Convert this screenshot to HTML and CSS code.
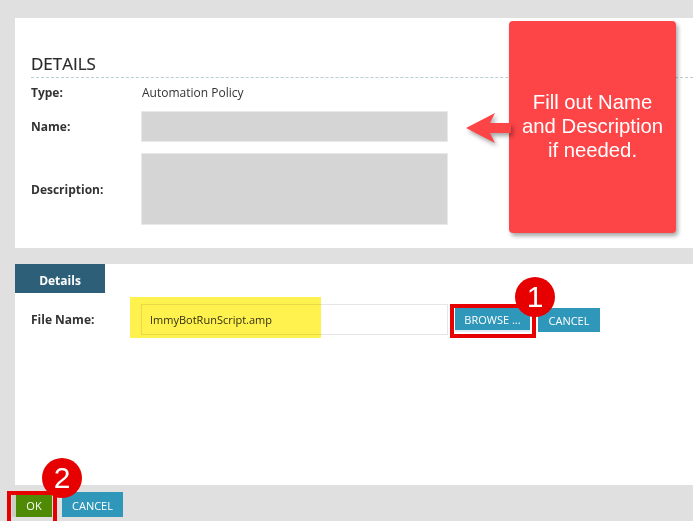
FILE: index.html
```html
<!DOCTYPE html>
<html>
<head>
<meta charset="utf-8">
<link rel="stylesheet" href="styles.css">
</head>
<body>
<div class="page">
  <section class="panel details">
    <h2 class="heading">DETAILS</h2>
    <div class="row row-type">
      <span class="label">Type:</span>
      <span class="value">Automation Policy</span>
    </div>
    <div class="row row-name">
      <span class="label">Name:</span>
      <div class="field field-name"></div>
    </div>
    <div class="row row-desc">
      <span class="label">Description:</span>
      <div class="field field-desc"></div>
    </div>
  </section>

  <section class="panel upload">
    <div class="tab">Details</div>
    <div class="row row-file">
      <span class="label">File Name:</span>
      <div class="file-input">ImmyBotRunScript.amp</div>
      <button class="btn btn-browse">BROWSE ...</button>
      <button class="btn btn-cancel">CANCEL</button>
    </div>
  </section>

  <footer class="footer">
    <button class="btn btn-ok">OK</button>
    <button class="btn btn-cancel btn-cancel2">CANCEL</button>
  </footer>
</div>

<!-- annotations -->
<div class="highlight"></div>
<div class="callout">Fill out Name<br>and Description<br>if needed.</div>
<svg class="arrow" width="50" height="40" viewBox="0 0 50 40">
  <polygon points="1,18 30,3 25,13 46,13 46,23 25,23 30,33" fill="#fd4547"/>
</svg>
<div class="box box-browse"></div>
<div class="box box-ok"></div>
<div class="badge badge-1">1</div>
<div class="badge badge-2">2</div>
</body>
</html>
```

FILE: styles.css
```css
* { box-sizing: border-box; }
html, body { margin: 0; padding: 0; }
body {
  background: #e0e0e0;
  font-family: "Open Sans", "Liberation Sans", sans-serif;
  color: #333;
  width: 693px;
  height: 521px;
  overflow: hidden;
  position: relative;
}
.page {
  display: flex;
  flex-direction: column;
  padding-top: 18px;
}
.panel {
  background: #fff;
  margin-left: 15px;
}
.details {
  height: 230px;
  padding: 36px 0 0 16px;
}
.heading {
  margin: 0;
  font-size: 17px;
  line-height: 20px;
  font-weight: 400;
  color: #2b2b2b;
  padding-bottom: 3px;
  border-bottom: 1px dashed #b9cdd6;
  -webkit-text-stroke: 0.2px #2b2b2b;
}
.row {
  display: flex;
  align-items: center;
}
.label {
  width: 110px;
  font-size: 12px;
  font-weight: 700;
  color: #333;
}
.value {
  font-size: 12px;
  color: #333;
  padding-left: 1px;
}
.row-type { height: 20px; margin-top: 4px; }
.row-name { margin-top: 9px; }
.row-desc { margin-top: 11px; }
.field {
  width: 307px;
  background: #d5d5d5;
  border: 1px solid #e8e8e8;
}
.field-name { height: 31px; }
.field-desc { height: 72px; }

.upload {
  margin-top: 16px;
  height: 221px;
}
.tab {
  width: 90px;
  height: 29px;
  background: #2e5f79;
  color: #fff;
  font-size: 12px;
  font-weight: 700;
  display: flex;
  align-items: center;
  justify-content: center;
  padding-top: 3px;
}
.row-file {
  margin-top: 11px;
  padding-left: 16px;
}
.file-input {
  width: 307px;
  height: 31px;
  border: 1px solid #e6e6e6;
  font-size: 11px;
  color: #333;
  display: flex;
  align-items: center;
  padding-left: 8px;
}
.btn {
  border: 0;
  font-family: "Open Sans", "Liberation Sans", sans-serif;
  font-size: 11px;
  color: #fff;
  padding: 0;
  height: 24px;
  cursor: pointer;
}
.btn-browse {
  margin-left: 7px;
  width: 75px;
  height: 25px;
  padding-top: 2px;
  background: #2f97b9;
  border-bottom: 2px solid #e4edf1;
}
.btn-cancel {
  margin-left: 8px;
  width: 62px;
  padding-top: 1px;
  background: #2f97b9;
}
.footer {
  display: flex;
  align-items: flex-start;
  padding: 7px 0 0 12px;
}
.btn-ok {
  width: 40px;
  height: 24px;
  margin-top: 1px;
  background: #4e8a03;
  border-left: 4px solid #c9cfc2;
  color: #fff;
}
.btn-cancel2 {
  margin-left: 10px;
  width: 61px;
  height: 25px;
}

/* annotations */
.highlight {
  position: absolute;
  left: 130px;
  top: 297px;
  width: 191px;
  height: 41px;
  background: #fff24f;
  mix-blend-mode: multiply;
}
.callout {
  position: absolute;
  left: 509px;
  top: 21px;
  width: 167px;
  height: 212px;
  background: #fd4547;
  border-radius: 4px;
  box-shadow: 2px 3px 4px rgba(0,0,0,0.35);
  color: #fff;
  font-family: "Liberation Sans", Arial, sans-serif;
  font-size: 20.3px;
  line-height: 24px;
  text-align: center;
  display: flex;
  align-items: center;
  justify-content: center;
  padding-bottom: 3px;
}
.arrow {
  position: absolute;
  left: 465px;
  top: 110px;
  filter: drop-shadow(2px 3px 2px rgba(0,0,0,0.35));
}
.box {
  position: absolute;
  border: 4px solid #e60000;
}
.box-browse {
  left: 450px;
  top: 304px;
  width: 86px;
  height: 34px;
}
.box-ok {
  left: 7px;
  top: 491px;
  width: 50px;
  height: 34px;
}
.badge {
  position: absolute;
  width: 40px;
  height: 40px;
  border-radius: 50%;
  background: #e60000;
  color: #fff;
  font-family: "Liberation Sans", Arial, sans-serif;
  font-size: 30px;
  line-height: 40px;
  text-align: center;
}
.badge-1 { left: 515px; top: 277px; }
.badge-2 { left: 42px; top: 458px; }
```
